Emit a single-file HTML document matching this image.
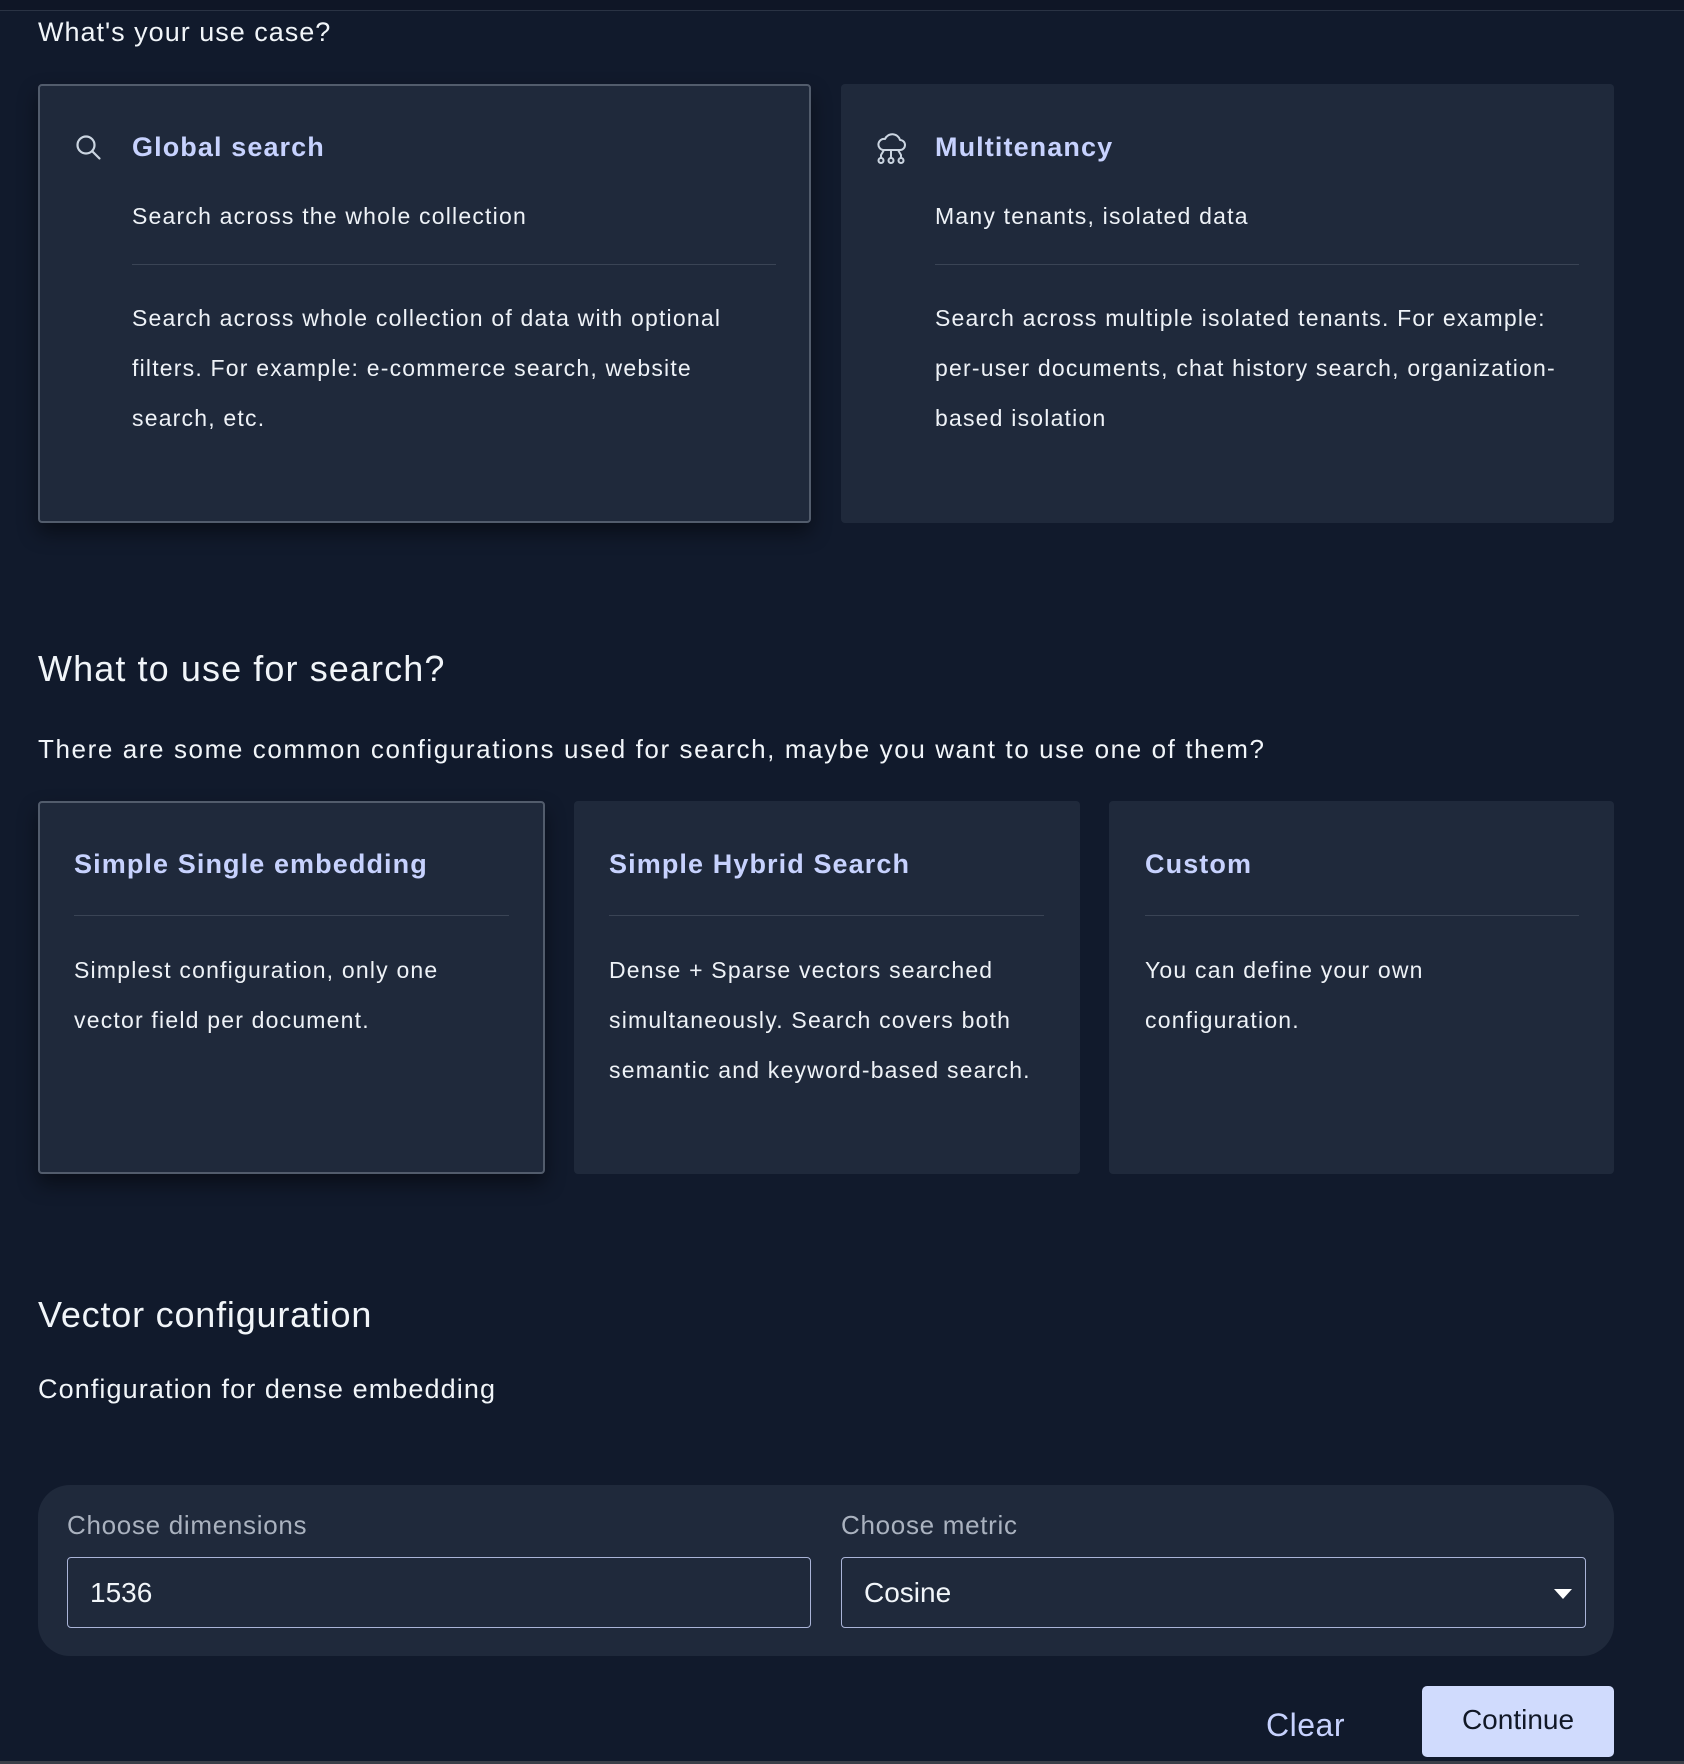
<!DOCTYPE html>
<html><head><style>
*{box-sizing:border-box;margin:0;padding:0}
body{width:1684px;height:1764px;background:#111a2c;font-family:"Liberation Sans",sans-serif;color:#f1f5f9;position:relative;overflow:hidden}
.abs{position:absolute}
.topline{left:0;top:0;width:1684px;height:11px;background:#0f1626;border-bottom:1px solid #2a3344}
.card{position:absolute;background:#1f293b;border-radius:4px}
.sel{border:2px solid #525c6c;box-shadow:0 10px 20px rgba(0,0,0,.45)}
.t{position:absolute;font-weight:bold;color:#c7d2fe;font-size:27px;white-space:nowrap;letter-spacing:1.1px}
.s{position:absolute;font-size:23px;color:#eef2f7;white-space:nowrap;letter-spacing:1.2px}
.div{position:absolute;height:1px;background:#3a4455}
.b{position:absolute;font-size:23px;line-height:50px;color:#eef2f7;letter-spacing:1.2px}
h{position:absolute;white-space:nowrap}
.inp{position:absolute;border:1px solid #aab4d8;border-radius:4px;height:71px;font-size:28px;padding-left:22px;line-height:69px}
</style></head><body>
<div class="abs topline"></div>
<h style="left:38px;top:17px;font-size:27px;letter-spacing:1px">What's your use case?</h>

<div class="card sel" style="left:38px;top:84px;width:773px;height:439px"></div>
<svg class="abs" style="left:74px;top:133px" width="30" height="30" viewBox="0 0 30 30" fill="none" stroke="#cbd5e1" stroke-width="2.2" stroke-linecap="round"><circle cx="12" cy="12" r="8.5"/><path d="M18.5 18.5l7 7"/></svg>
<div class="t" style="left:132px;top:132px">Global search</div>
<div class="s" style="left:132px;top:203px">Search across the whole collection</div>
<div class="div" style="left:132px;top:264px;width:644px"></div>
<div class="b" style="left:132px;top:293px;width:650px">Search across whole collection of data with optional filters. For example: e-commerce search, website search, etc.</div>

<div class="card" style="left:841px;top:84px;width:773px;height:439px"></div>
<svg class="abs" style="left:874px;top:133px" width="34" height="32" viewBox="0 0 34 32" fill="none" stroke="#cbd5e1" stroke-width="2" stroke-linecap="round" stroke-linejoin="round"><path d="M9 17h17a5 5 0 0 0 0-10 8 8 0 0 0-15-1 5.5 5.5 0 0 0-2 11z"/><path d="M17 17v8M10 17l-3 5v3M24 17l3 5v3"/><circle cx="7" cy="27.5" r="2.5"/><circle cx="17" cy="27.5" r="2.5"/><circle cx="27" cy="27.5" r="2.5"/></svg>
<div class="t" style="left:935px;top:132px">Multitenancy</div>
<div class="s" style="left:935px;top:203px">Many tenants, isolated data</div>
<div class="div" style="left:935px;top:264px;width:644px"></div>
<div class="b" style="left:935px;top:293px;width:650px">Search across multiple isolated tenants. For example: per-user documents, chat history search, organization-based isolation</div>

<h style="left:38px;top:648px;font-size:36px;letter-spacing:1.1px">What to use for search?</h>
<h style="left:38px;top:734px;font-size:26px;letter-spacing:1.6px">There are some common configurations used for search, maybe you want to use one of them?</h>

<div class="card sel" style="left:38px;top:801px;width:507px;height:373px"></div>
<div class="t" style="left:74px;top:849px">Simple Single embedding</div>
<div class="div" style="left:74px;top:915px;width:435px"></div>
<div class="b" style="left:74px;top:945px;width:420px">Simplest configuration, only one vector field per document.</div>

<div class="card" style="left:574px;top:801px;width:506px;height:373px"></div>
<div class="t" style="left:609px;top:849px">Simple Hybrid Search</div>
<div class="div" style="left:609px;top:915px;width:435px"></div>
<div class="b" style="left:609px;top:945px;width:445px">Dense + Sparse vectors searched simultaneously. Search covers both semantic and keyword-based search.</div>

<div class="card" style="left:1109px;top:801px;width:505px;height:373px"></div>
<div class="t" style="left:1145px;top:849px">Custom</div>
<div class="div" style="left:1145px;top:915px;width:434px"></div>
<div class="b" style="left:1145px;top:945px;width:320px">You can define your own configuration.</div>

<h style="left:38px;top:1294px;font-size:36px;letter-spacing:0.8px">Vector configuration</h>
<h style="left:38px;top:1374px;font-size:27px;letter-spacing:1.1px">Configuration for dense embedding</h>

<div class="abs" style="left:38px;top:1485px;width:1576px;height:171px;background:#1f293b;border-radius:32px"></div>
<h style="left:67px;top:1510px;font-size:26px;color:#aab2bf;letter-spacing:0.7px">Choose dimensions</h>
<h style="left:841px;top:1510px;font-size:26px;color:#aab2bf;letter-spacing:0.7px">Choose metric</h>
<div class="inp" style="left:67px;top:1557px;width:744px">1536</div>
<div class="inp" style="left:841px;top:1557px;width:745px">Cosine</div>
<div class="abs" style="left:1554px;top:1589px;width:0;height:0;border-left:9px solid transparent;border-right:9px solid transparent;border-top:10px solid #fff"></div>

<h style="left:1266px;top:1707px;font-size:32px;color:#c7d2fe;letter-spacing:0.5px">Clear</h>
<div class="abs" style="left:1422px;top:1686px;width:192px;height:71px;background:#d0dbfd;border-radius:5px;color:#111827;font-size:28px;text-align:center;line-height:68px">Continue</div>
<div class="abs" style="left:0;top:1761px;width:1684px;height:3px;background:#3a3f48"></div>
</body></html>
